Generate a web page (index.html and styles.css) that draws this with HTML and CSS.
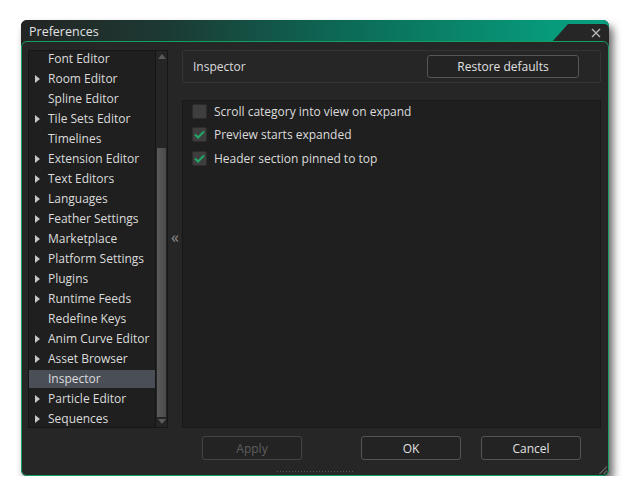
FILE: index.html
```html
<!DOCTYPE html>
<html>
<head>
<meta charset="utf-8">
<link rel="stylesheet" href="styles.css">
</head>
<body>
<div class="window">
  <div class="titlebar">
    <span class="title">Preferences</span>
    <div class="closetab">
      <svg class="close" width="10" height="10" viewBox="0 0 10 10"><path d="M1 1 L9 9 M9 1 L1 9" stroke="#b4b4b4" stroke-width="1.4" fill="none"/></svg>
    </div>
  </div>
  <div class="frame">
    <div class="main">
      <div class="tree">
        <ul class="list">
          <li class="item">Font Editor</li>
          <li class="item exp">Room Editor</li>
          <li class="item">Spline Editor</li>
          <li class="item exp">Tile Sets Editor</li>
          <li class="item">Timelines</li>
          <li class="item exp">Extension Editor</li>
          <li class="item exp">Text Editors</li>
          <li class="item exp">Languages</li>
          <li class="item exp">Feather Settings</li>
          <li class="item exp">Marketplace</li>
          <li class="item exp">Platform Settings</li>
          <li class="item exp">Plugins</li>
          <li class="item exp">Runtime Feeds</li>
          <li class="item">Redefine Keys</li>
          <li class="item exp">Anim Curve Editor</li>
          <li class="item exp">Asset Browser</li>
          <li class="item sel">Inspector</li>
          <li class="item exp">Particle Editor</li>
          <li class="item exp">Sequences</li>
        </ul>
        <div class="scrollbar">
          <div class="arrow up"></div>
          <div class="track"><div class="thumb"></div></div>
          <div class="arrow down"></div>
        </div>
      </div>
      <div class="collapse">«</div>
      <div class="right">
        <div class="header">
          <span class="htitle">Inspector</span>
          <button class="btn restore">Restore defaults</button>
        </div>
        <div class="options">
          <label class="opt"><span class="cb"></span>Scroll category into view on expand</label>
          <label class="opt"><span class="cb on"><svg width="11" height="9" viewBox="0 0 11 9"><path d="M1 4.5 L4 7.5 L10 1.5" stroke="#1fa866" stroke-width="2" fill="none"/></svg></span>Preview starts expanded</label>
          <label class="opt"><span class="cb on"><svg width="11" height="9" viewBox="0 0 11 9"><path d="M1 4.5 L4 7.5 L10 1.5" stroke="#1fa866" stroke-width="2" fill="none"/></svg></span>Header section pinned to top</label>
        </div>
      </div>
    </div>
    <div class="footer">
      <button class="btn apply">Apply</button>
      <button class="btn ok">OK</button>
      <button class="btn cancel">Cancel</button>
    </div>
    <div class="grip"></div>
    <div class="resize"></div>
  </div>
</div>
</body>
</html>
```

FILE: styles.css
```css
* { box-sizing: border-box; }
html, body { margin: 0; padding: 0; background: #ffffff; }
body { font-family: "Open Sans", "Noto Sans", sans-serif; font-size: 12px; color: #d6d6d6; }

.window {
  position: relative;
  width: 588px;
  height: 456px;
  margin: 20px 0 0 21px;
  display: flex;
  flex-direction: column;
  border-radius: 6px;
  box-shadow: 4px 6px 9px rgba(0,0,0,0.6);
  background: #262626;
}

.titlebar {
  position: relative;
  height: 22px;
  flex: none;
  border-radius: 6px 6px 0 0;
  background: linear-gradient(to right, #242424 0%, #1c3a34 25%, #0c6a56 55%, #079a7b 90%, #07a080 100%);
  display: flex;
  align-items: center;
  padding-left: 8px;
}
.title { font-size: 12.5px; color: #e2e2e2; }
.closetab {
  position: absolute;
  right: 0;
  top: 4px;
  bottom: 0;
  width: 57px;
  background: #262626;
  clip-path: polygon(16px 0, 100% 0, 100% 100%, 0 100%);
  border-top-right-radius: 5px;
  display: flex;
  align-items: center;
  justify-content: flex-end;
  padding-right: 8px;
}

.frame {
  position: relative;
  flex: 1;
  border: 1px solid #12a060;
  border-radius: 6px;
  background: #262626;
  padding: 8px 7px 0 6px;
  display: flex;
  flex-direction: column;
  margin-top: -1px;
}

.main { display: flex; height: 378px; }

.tree {
  width: 140px;
  height: 378px;
  background: #1f1f1f;
  border: 1px solid #161616;
  display: flex;
  overflow: hidden;
}
.list {
  list-style: none;
  margin: -1px 0 0 0;
  padding: 0;
  width: 126px;
}
.item {
  position: relative;
  height: 18px;
  margin-bottom: 2px;
  line-height: 18px;
  padding-left: 19px;
  white-space: nowrap;
  color: #dcdcdc;
}
.item.exp::before {
  content: "";
  position: absolute;
  left: 6px;
  top: 5px;
  border-left: 5px solid #c8c8c8;
  border-top: 4px solid transparent;
  border-bottom: 4px solid transparent;
}
.item.sel { background: #4a4e57; }

.scrollbar {
  width: 12px;
  display: flex;
  flex-direction: column;
  background: #252525;
  border-left: 1px solid #151515;
}
.arrow { height: 10px; flex: none; position: relative; }
.arrow.up::after, .arrow.down::after {
  content: "";
  position: absolute;
  left: 2px;
  border-left: 4px solid transparent;
  border-right: 4px solid transparent;
}
.arrow.up::after { top: 3px; border-bottom: 5px solid #5a5a5a; }
.arrow.down::after { top: 2px; border-top: 5px solid #5a5a5a; }
.track { flex: 1; position: relative; }
.thumb {
  position: absolute;
  left: 1px;
  right: 1px;
  top: 87px;
  bottom: 0;
  background: linear-gradient(to right, #5a5a5a, #4a4a4a);
}

.collapse {
  width: 14px;
  display: flex;
  align-items: center;
  justify-content: center;
  color: #8a8a8a;
  font-size: 16px;
  padding-bottom: 4px;
}

.right { flex: 1; display: flex; flex-direction: column; gap: 17px; }
.header {
  height: 33px;
  border: 1px solid #343434;
  border-radius: 2px;
  background: #262626;
  display: flex;
  align-items: center;
  justify-content: space-between;
  padding: 0 21px 0 10px;
}
.htitle { color: #dcdcdc; }

.btn {
  font-family: inherit;
  font-size: 12px;
  color: #e0e0e0;
  background: #232323;
  border: 1px solid #555555;
  border-radius: 3px;
  height: 23px;
  padding: 0;
}
.restore { width: 152px; }

.options {
  flex: 1;
  background: #1f1f1f;
  border: 1px solid #181818;
  padding: 0 0 0 9px;
  display: flex;
  flex-direction: column;
  gap: 3.5px;
}
.opt {
  display: flex;
  align-items: center;
  height: 20px;
  gap: 7px;
  color: #dcdcdc;
}
.cb {
  width: 15px;
  height: 15px;
  border-radius: 2px;
  background: #3e3e3e;
  border: 1px solid #2c2c2c;
  display: flex;
  align-items: center;
  justify-content: center;
}

.footer {
  display: flex;
  padding: 8px 0 0 174px;
}
.footer .btn { width: 100px; height: 24px; }
.apply { color: #5e5e5e; border-color: #444444; }
.ok { margin-left: 59px; }
.cancel { margin-left: 20px; }

.grip {
  position: absolute;
  left: 254px;
  bottom: 2px;
  width: 78px;
  height: 3px;
  background-image: radial-gradient(circle, #555 0.8px, transparent 1px);
  background-size: 3px 3px;
}
.resize {
  position: absolute;
  right: 1px;
  bottom: 1px;
  width: 8px;
  height: 8px;
  background: linear-gradient(135deg, transparent 50%, #5a5a5a 50%, #5a5a5a 60%, transparent 60%, transparent 75%, #5a5a5a 75%, #5a5a5a 85%, transparent 85%);
}
```
